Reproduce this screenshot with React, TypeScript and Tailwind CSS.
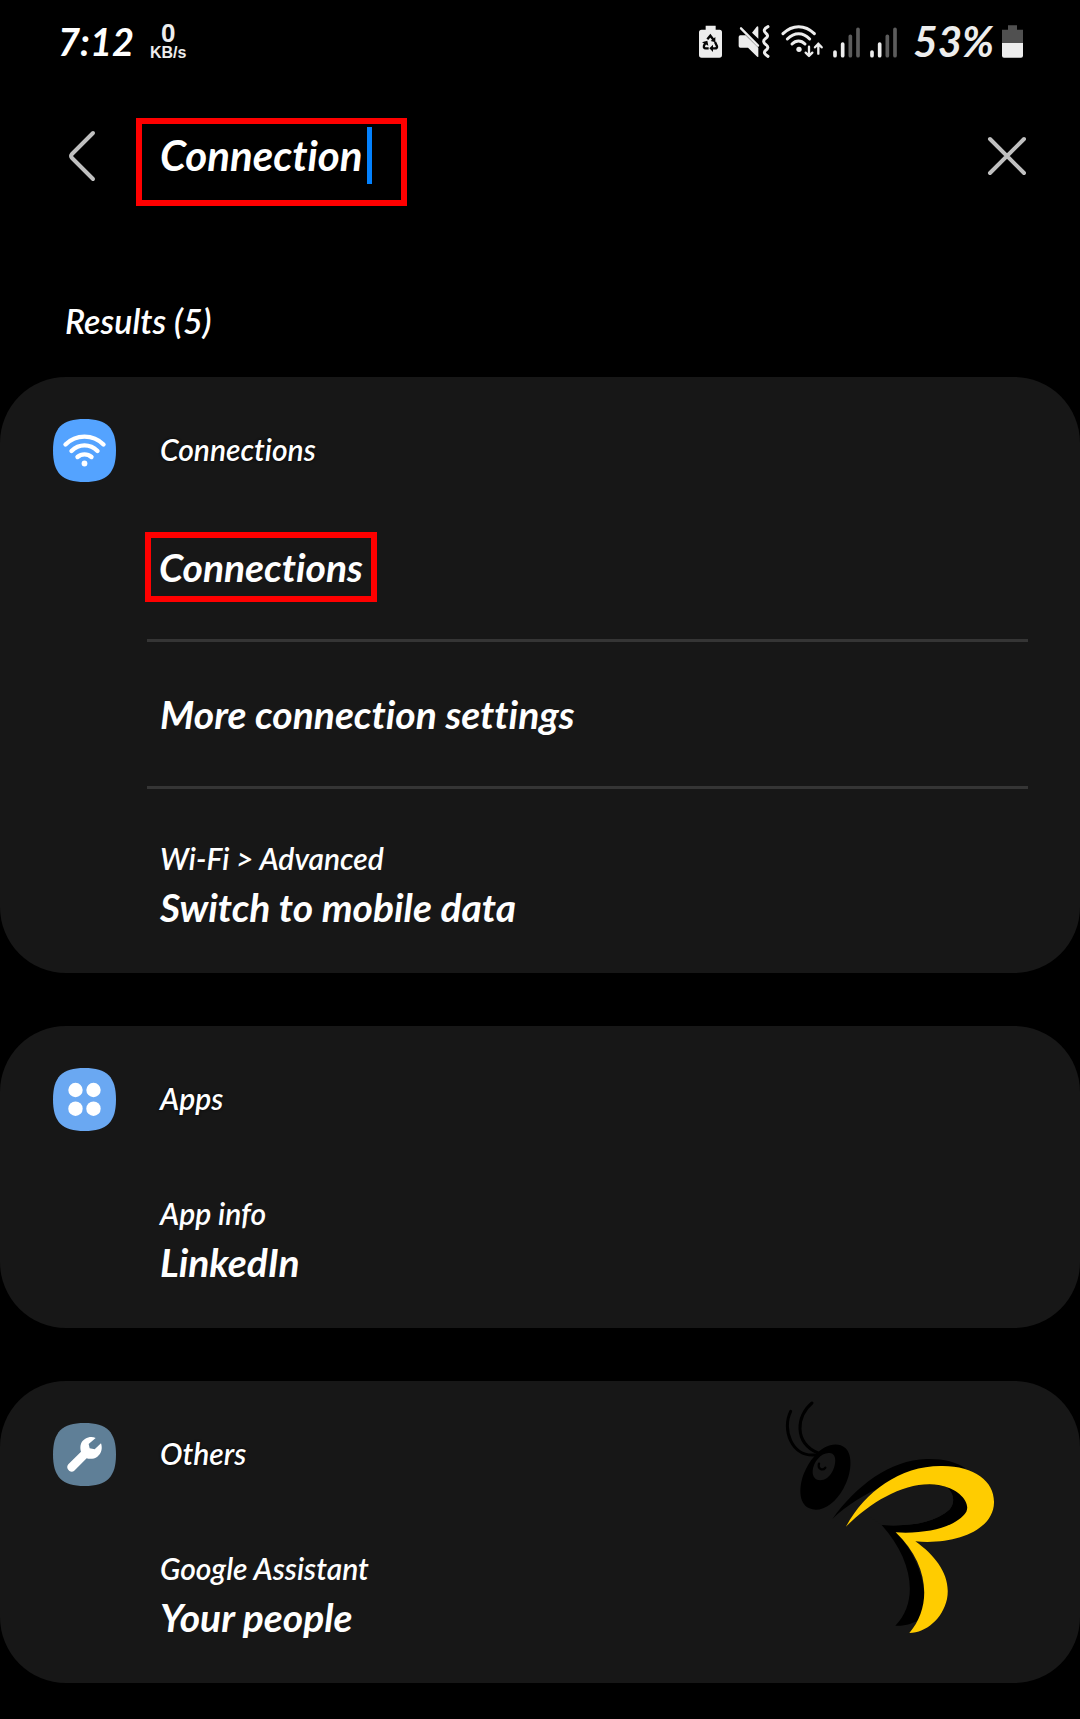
import React, { useState } from 'react';

interface ResultItem {
  title: string;
  path?: string;
  highlighted?: boolean;
}

interface ResultGroup {
  name: string;
  icon: React.ReactNode;
  items: ResultItem[];
  watermark?: boolean;
}

const SQUIRCLE = 'M31.5 0C54 0 63 9 63 31.5S54 63 31.5 63 0 54 0 31.5 9 0 31.5 0Z';

const ConnectionsIcon = () => (
  <svg className="size-[63px] shrink-0" viewBox="0 0 63 63" fill="none" aria-hidden="true">
    <path d={SQUIRCLE} fill="#54a3ff" />
    <g stroke="#fff" strokeWidth="4.4" strokeLinecap="round">
      <path d="M12.5 25.5C23 15 40 15 50.5 25.5" />
      <path d="M18.5 32C26 24.5 37 24.5 44.5 32" />
      <path d="M24.5 38C28.5 34.5 34.5 34.5 38.5 38" />
    </g>
    <circle cx="31.5" cy="44.5" r="2.9" fill="#fff" />
  </svg>
);

const AppsIcon = () => (
  <svg className="size-[63px] shrink-0" viewBox="0 0 63 63" aria-hidden="true">
    <path d={SQUIRCLE} fill="#6aa8f2" />
    <g fill="#fff">
      <circle cx="22.5" cy="22" r="7.2" />
      <circle cx="40.5" cy="22" r="7.2" />
      <circle cx="22.5" cy="40.7" r="7.2" />
      <circle cx="40.5" cy="40.7" r="7.2" />
    </g>
  </svg>
);

const OthersIcon = () => (
  <svg className="size-[63px] shrink-0" viewBox="0 0 189 189" aria-hidden="true">
    <path d={SQUIRCLE} transform="scale(3)" fill="#5f7f97" />
    <path
      fill="#fff"
      d="M128 45C112 38 92 45 84 62C81 70 82 79 84 86L46 124C36 135 51 152 63 144L101 106C110 109 124 108 133 101C146 92 149 75 144 61L125 79L110 76L107 63Z"
    />
  </svg>
);

const BatteryRecycleIcon = () => (
  <svg className="h-[33px] w-[23px]" viewBox="0 0 69 99" aria-hidden="true">
    <path fill="#ededed" d="M20 2H50V14H62Q69 14 69 22V90Q69 98 61 98H8Q0 98 0 90V22Q0 14 8 14H20Z" />
    <g fill="none" stroke="#050505" strokeWidth="7">
      <path d="M25 43L34 32L44 45" />
      <path d="M48 51L54 64Q55 70 48 70H37" />
      <path d="M29 70H20Q13 70 15 62L20 52" />
    </g>
    <path fill="#050505" d="M49 36V52L35 48ZM42 59V81L31 70ZM9 52L25 47L28 62Z" />
  </svg>
);

const MuteVibrateIcon = () => (
  <svg className="h-[33px] w-[33px]" viewBox="0 0 99 99" aria-hidden="true">
    <path fill="#ededed" d="M7 31H23L61 68V95Q59 97 56 94L30 68H7Q2 68 2 63V36Q2 31 7 31ZM42 23L56 5Q61 2 61 8V41Z" />
    <path d="M9 10L60 62" stroke="#ededed" strokeWidth="7" strokeLinecap="round" />
    <path
      d="M90 5Q72 14 83 24Q95 33 82 41Q71 50 84 59Q96 68 82 77Q74 85 90 94"
      fill="none"
      stroke="#ededed"
      strokeWidth="9"
      strokeLinecap="round"
    />
  </svg>
);

const WifiDataIcon = () => (
  <svg className="h-[33px] w-[42px]" viewBox="0 0 126 99" fill="none" aria-hidden="true">
    <g stroke="#ededed" strokeWidth="9" strokeLinecap="round">
      <path d="M6 26C34-2 72-2 100 26" />
      <path d="M19 42C40 21 66 21 86 42" />
      <path d="M33 57C45 45 60 45 72 57" />
    </g>
    <circle cx="54" cy="73" r="8" fill="#ededed" />
    <g stroke="#ededed" strokeWidth="7" strokeLinecap="round" strokeLinejoin="round">
      <path d="M84 65V92M74 83L84 93L94 83" />
      <path d="M112 86V56M102 67L112 56L122 67" />
    </g>
  </svg>
);

const SignalIcon = () => (
  <svg className="h-[33px] w-[27px]" viewBox="0 0 81 99" strokeWidth="11" strokeLinecap="round" aria-hidden="true">
    <path d="M6 81V92M29 57V92" stroke="#ededed" />
    <path d="M52 34V92M75 13V92" stroke="#5c5c5c" />
  </svg>
);

const BatteryIcon = () => (
  <svg className="h-[33px] w-[21px]" viewBox="0 0 63 99" aria-hidden="true">
    <path fill="#505050" d="M18 1H45V14H63V54H0V14H18Z" />
    <path fill="#ededed" d="M0 54H63V92Q63 98 57 98H6Q0 98 0 92Z" />
  </svg>
);

// bee watermark over the last card
const BeeLogo = () => (
  <svg
    className="pointer-events-none absolute -top-px right-[60px] h-[270px] w-[260px]"
    viewBox="0 0 780 810"
    fill="none"
    aria-hidden="true"
  >
    <g stroke="#000" strokeWidth="9" strokeLinecap="round">
      <path d="M92 94C65 148 95 231 164 225" />
      <path d="M156 69C109 107 101 188 174 219" />
    </g>
    <path
      fill="#000"
      fillRule="evenodd"
      d="M162 230C192 193 232 184 256 204C279 224 276 282 250 326C225 372 181 400 148 385C114 371 117 317 132 280C139 262 150 243 162 230ZM213 220C188 213 160 244 158 272C156 299 179 308 201 294C224 279 237 226 213 220Z"
    />
    <path d="M177 251C172 267 188 273 196 263" stroke="#000" strokeWidth="7" strokeLinecap="round" />
    <path
      fill="#000"
      d="M217 417C287 319 389 240 500 237C549 236 590 246 615 264L560 320C603 332 631 359 625 391C611 445 515 466 410 460C472 524 501 614 492 686L484 716C460 730 433 739 406 737C478 664 458 538 365 435C447 441 526 427 568 389C589 367 579 335 559 320L372 318C317 340 258 377 217 417Z"
    />
    <path
      fill="#171717"
      d="M320 366C393 324 482 302 558 320C580 335 588 367 568 389C526 427 447 441 365 435L300 391Z"
    />
    <path
      fill="#fc0"
      d="M258 440C313 337 419 258 542 258C642 256 704 304 702 368C700 451 586 495 466 484C529 529 574 588 561 657C548 715 500 758 448 759C518 677 507 552 407 457C505 463 591 439 619 395C632 368 597 325 536 315C442 301 336 362 258 440Z"
    />
  </svg>
);

const GROUPS: ResultGroup[] = [
  {
    name: 'Connections',
    icon: <ConnectionsIcon />,
    items: [
      { title: 'Connections', highlighted: true },
      { title: 'More connection settings' },
      { path: 'Wi-Fi > Advanced', title: 'Switch to mobile data' },
    ],
  },
  {
    name: 'Apps',
    icon: <AppsIcon />,
    items: [{ path: 'App info', title: 'LinkedIn' }],
  },
  {
    name: 'Others',
    icon: <OthersIcon />,
    items: [{ path: 'Google Assistant', title: 'Your people' }],
    watermark: true,
  },
];

const StatusBar = () => (
  <div className="flex h-[82px] items-center justify-between pr-[57px] pl-[58px] leading-none font-bold italic">
    <div className="flex items-center gap-4">
      <span className="text-[38px]">7:12</span>
      <div className="flex flex-col items-center font-['Liberation_Sans',sans-serif] text-[#ededed] not-italic">
        <span className="text-[26px] leading-6">0</span>
        <span className="text-base leading-4">KB/s</span>
      </div>
    </div>
    <div className="flex items-center text-[#ededed]">
      <BatteryRecycleIcon />
      <div className="ml-4 flex items-center gap-[10px]">
        <MuteVibrateIcon />
        <WifiDataIcon />
        <SignalIcon />
        <SignalIcon />
      </div>
      <span className="mr-2 ml-4 text-[42px]">53%</span>
      <BatteryIcon />
    </div>
  </div>
);

const ResultCard: React.FC<{ group: ResultGroup }> = ({ group }) => (
  <section className="relative rounded-[66px] bg-[#171717] [text-shadow:0_0_3px_#000]">
    <div className="flex h-[118px] items-start pt-[42px] pl-[53px]">
      {group.icon}
      <h2 className="ml-11 text-[30px] leading-[61px] font-semibold italic">{group.name}</h2>
    </div>

    <ul className="mr-[52px] ml-[147px] divide-y-3 divide-[#353535]">
      {group.items.map((item) => (
        <li key={item.title}>
          <button
            type="button"
            className={`flex w-full flex-col items-start justify-center px-[13px] text-left italic ${
              item.path ? 'h-[184px] gap-1 pt-3' : 'h-36'
            }`}
          >
            {item.path && <span className="text-[30px] leading-9 font-semibold">{item.path}</span>}
            <span
              className={`text-[39px] font-bold ${
                item.highlighted
                  ? '-ml-[15px] border-6 border-[#f00] px-2 leading-[58px]'
                  : 'leading-[54px]'
              }`}
            >
              {item.title}
            </span>
          </button>
        </li>
      ))}
    </ul>

    {group.watermark && <BeeLogo />}
  </section>
);

const App: React.FC = () => {
  const [query, setQuery] = useState('Connection');

  return (
    <div className="min-h-screen bg-black pb-9 font-[Lato,sans-serif] text-white [font-variant-ligatures:none]">
      <StatusBar />

      <header className="flex items-start justify-between pt-9 pr-[52px] pl-[67px]">
        <div className="flex items-start">
          <button type="button" aria-label="Back" className="mt-3">
            <svg className="h-[52px] w-[30px]" viewBox="0 0 30 52" fill="none" aria-hidden="true">
              <path
                d="M26 3L5 24Q3 26 5 28L26 49"
                stroke="#c0c0c0"
                strokeWidth="4"
                strokeLinecap="round"
                strokeLinejoin="round"
              />
            </svg>
          </button>
          <div className="ml-[39px] flex h-22 w-[271px] items-start border-6 border-[#f00] pt-[3px] pl-[18px]">
            <input
              type="text"
              aria-label="Search settings"
              value={query}
              onChange={(e) => setQuery(e.target.value)}
              className="h-[57px] w-[207px] bg-transparent text-[42px] font-bold italic caret-[#0381fe] outline-none"
            />
            <span className="h-[57px] w-[5px] bg-[#0381fe]" />
          </div>
        </div>
        <button type="button" aria-label="Clear search" className="mt-[17px]">
          <svg className="size-[42px]" viewBox="0 0 42 42" fill="none" aria-hidden="true">
            <path d="M4 4L38 38M38 4L4 38" stroke="#c0c0c0" strokeWidth="4" strokeLinecap="round" />
          </svg>
        </button>
      </header>

      <main>
        <p className="mt-[90px] mb-[31px] pl-[65px] text-[34px] leading-[50px] font-semibold italic">Results (5)</p>
        <div className="flex flex-col gap-[53px]">
          {GROUPS.map((group) => (
            <ResultCard key={group.name} group={group} />
          ))}
        </div>
      </main>
    </div>
  );
};

export default App;
